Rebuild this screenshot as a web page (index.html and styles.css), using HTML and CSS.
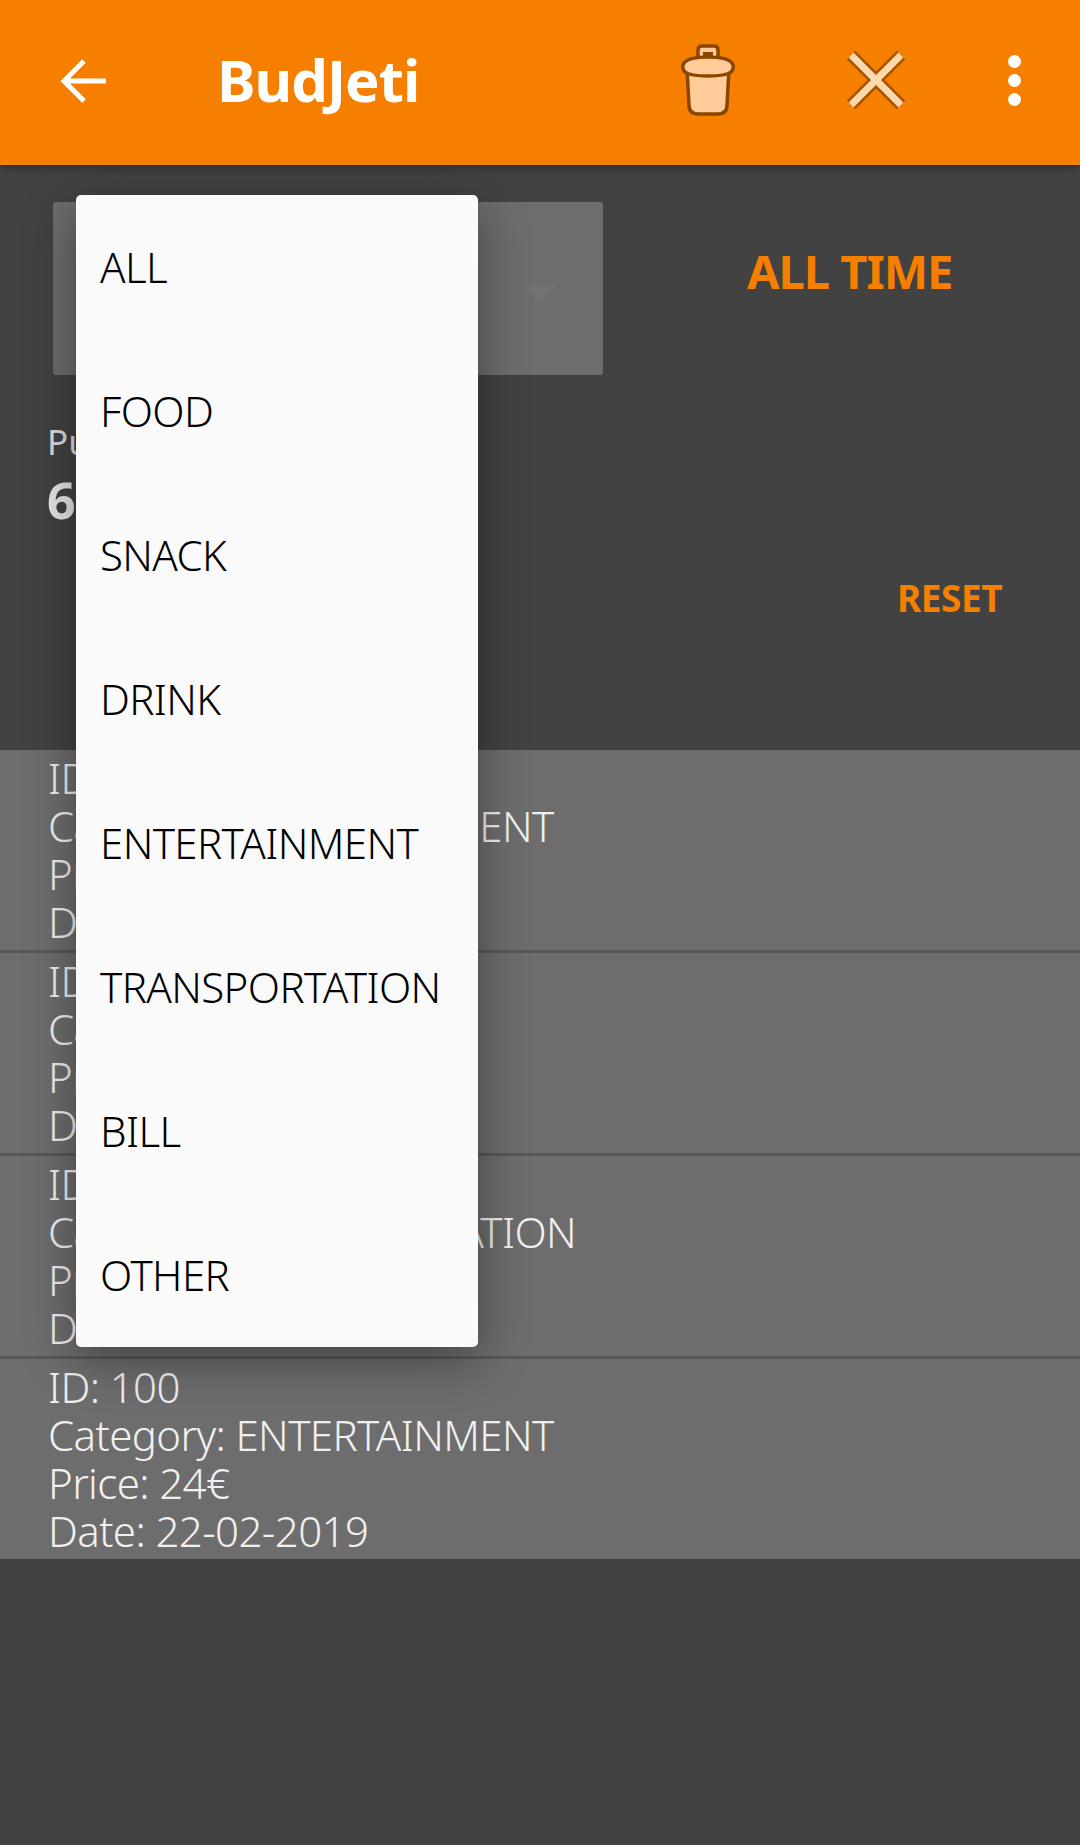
FILE: index.html
```html
<!DOCTYPE html>
<html lang="en">
<head>
  <meta charset="UTF-8">
  <meta name="viewport" content="width=device-width, initial-scale=1.0">
  <title>BudJeti</title>
  <link rel="stylesheet" href="styles.css">
</head>
<body>
  <header class="appbar">
    <svg class="back-icon" viewBox="0 0 48 48" width="48" height="48">
      <path d="M46 24H5M24 4L4 24l20 20" fill="none" stroke="#fff" stroke-width="5"/>
    </svg>
    <h1 class="appbar-title">BudJeti</h1>
    <svg class="trash-icon" viewBox="0 0 54 74" width="54" height="74">
      <path d="M17 17V7q0-4 4-4h12q4 0 4 4v10" fill="#ffcc99" stroke="#8a4500" stroke-width="3.5"/>
      <rect x="22" y="9" width="10" height="4" fill="#8a4500"/>
      <path d="M6 26l2 36q0 9 9 9h20q9 0 9-9l2-36z" fill="#ffcc99" stroke="#8a4500" stroke-width="3.5"/>
      <path d="M4 29q-4-4-1-9 5-6 24-6t24 6q3 5-1 9-5 4-23 4T4 29z" fill="#ffcc99" stroke="#8a4500" stroke-width="3.5"/>
    </svg>
    <svg class="close-icon" viewBox="0 0 60 60" width="60" height="60">
      <path d="M5 5l50 50M55 5L5 55" stroke="#8a4500" stroke-width="12" stroke-linejoin="round" opacity="0.75"/>
      <path d="M5 5l50 50M55 5L5 55" stroke="#ffd9ae" stroke-width="7"/>
    </svg>
    <div class="more-icon"><span></span><span></span><span></span></div>
  </header>

  <main class="content">
    <section class="summary">
      <div class="filter-row">
        <div class="spinner"><span class="spinner-arrow"></span></div>
        <div class="period">ALL TIME</div>
      </div>
      <div class="total-label">Purchases</div>
      <div class="total-value">64</div>
      <div class="reset-row"><span class="reset">RESET</span></div>
    </section>

    <section class="purchase-list">
      <div class="purchase">
        <div>ID: 103</div>
        <div>Category: ENTERTAINMENT</div>
        <div>Price: 12€</div>
        <div>Date: 25-02-2019</div>
      </div>
      <div class="purchase">
        <div>ID: 102</div>
        <div>Category: FOOD</div>
        <div>Price: 8€</div>
        <div>Date: 24-02-2019</div>
      </div>
      <div class="purchase">
        <div>ID: 101</div>
        <div>Category: TRANSPORTATION</div>
        <div>Price: 20€</div>
        <div>Date: 23-02-2019</div>
      </div>
      <div class="purchase">
        <div>ID: 100</div>
        <div>Category: ENTERTAINMENT</div>
        <div>Price: 24€</div>
        <div>Date: 22-02-2019</div>
      </div>
    </section>
  </main>

  <ul class="dropdown">
    <li>ALL</li>
    <li>FOOD</li>
    <li>SNACK</li>
    <li>DRINK</li>
    <li>ENTERTAINMENT</li>
    <li>TRANSPORTATION</li>
    <li>BILL</li>
    <li>OTHER</li>
  </ul>
</body>
</html>
```

FILE: styles.css
```css
/* Page */
html, body {
  margin: 0;
  padding: 0;
}
body {
  position: relative;
  width: 1080px;
  height: 1845px;
  overflow: hidden;
  background-color: #424242;
  font-family: "Noto Sans", sans-serif;
  color: #f0f0f0;
}

/* App bar */
.appbar {
  position: relative;
  z-index: 1;
  display: flex;
  align-items: center;
  height: 165px;
  padding: 0 59px 0 60px;
  box-sizing: border-box;
  background-color: #f77f00;
  box-shadow: 0 3px 8px rgba(0, 0, 0, 0.3);
}
.back-icon {
  flex: none;
  margin-top: -4px;
}
.appbar-title {
  margin: -6px 0 0 109px;
  font-size: 58px;
  font-weight: 700;
  letter-spacing: -1px;
  color: #fff;
}
.trash-icon {
  flex: none;
  margin: -5px 0 0 auto;
}
.close-icon {
  flex: none;
  margin: -5px 0 0 111px;
}
.more-icon {
  display: flex;
  flex-direction: column;
  gap: 6px;
  margin: -4px 0 0 102px;
}
.more-icon span {
  width: 13px;
  height: 13px;
  border-radius: 50%;
  background-color: #fff;
}

/* Summary block */
.summary {
  height: 585px;
  box-sizing: border-box;
  padding: 37px 78px 0 47px;
}
.filter-row {
  display: flex;
  align-items: flex-start;
}
.spinner {
  position: relative;
  width: 550px;
  height: 173px;
  margin-left: 6px;
  background-color: #6d6d6d;
  border-radius: 3px;
}
.spinner-arrow {
  position: absolute;
  left: 471px;
  top: 83px;
  border-left: 16px solid transparent;
  border-right: 16px solid transparent;
  border-top: 18px solid #727272;
}
.period {
  margin: 37px 0 0 144px;
  font-size: 47px;
  font-weight: 700;
  letter-spacing: -1px;
  color: #f77f00;
  white-space: nowrap;
}
.total-label {
  margin-top: 43px;
  font-size: 35px;
  color: #dcdcdc;
}
.total-value {
  margin-top: 1px;
  font-size: 50px;
  font-weight: 700;
  color: #e6e6e6;
}
.reset-row {
  display: flex;
  justify-content: flex-end;
  margin-top: 38px;
}
.reset {
  font-size: 37px;
  font-weight: 700;
  letter-spacing: -0.5px;
  color: #f77f00;
}

/* Purchase rows */
.purchase-list {
  display: flex;
  flex-direction: column;
  gap: 3px;
  background-color: #585858;
}
.purchase {
  height: 200px;
  box-sizing: border-box;
  padding: 4px 0 0 48px;
  background-color: #6d6d6d;
  font-size: 42px;
  font-weight: 300;
  line-height: 48px;
  letter-spacing: -0.6px;
  white-space: nowrap;
}

/* Category dropdown */
.dropdown {
  position: absolute;
  z-index: 2;
  left: 76px;
  top: 195px;
  width: 402px;
  height: 1152px;
  margin: 0;
  padding: 0;
  list-style: none;
  background-color: #fafafa;
  border-radius: 5px;
  box-shadow: 0 12px 50px rgba(0, 0, 0, 0.4);
}
.dropdown li {
  height: 144px;
  box-sizing: border-box;
  padding: 45px 0 0 24px;
  font-size: 42px;
  font-weight: 300;
  line-height: 54px;
  letter-spacing: -0.6px;
  color: #000;
  white-space: nowrap;
}
```
